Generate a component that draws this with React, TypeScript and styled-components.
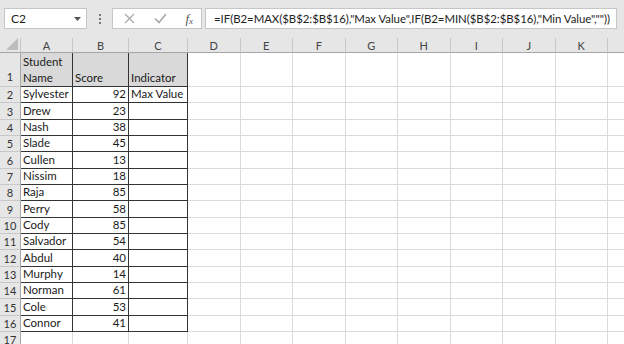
import styled, { createGlobalStyle } from "styled-components";

const GlobalStyle = createGlobalStyle`
  html, body {
    margin: 0;
    padding: 0;
    background: #ffffff;
    overflow: hidden;
  }
  body {
    font-family: Lato, "Liberation Sans", sans-serif;
  }
`;

const columns = ["A", "B", "C", "D", "E", "F", "G", "H", "I", "J", "K", "L"];

const students: [string, number, string][] = [
  ["Sylvester", 92, "Max Value"],
  ["Drew", 23, ""],
  ["Nash", 38, ""],
  ["Slade", 45, ""],
  ["Cullen", 13, ""],
  ["Nissim", 18, ""],
  ["Raja", 85, ""],
  ["Perry", 58, ""],
  ["Cody", 85, ""],
  ["Salvador", 54, ""],
  ["Abdul", 40, ""],
  ["Murphy", 14, ""],
  ["Norman", 61, ""],
  ["Cole", 53, ""],
  ["Connor", 41, ""],
];

const FORMULA =
  '=IF(B2=MAX($B$2:$B$16),"Max Value",IF(B2=MIN($B$2:$B$16),"Min Value",""))';

function App() {
  return (
    <Page>
      <GlobalStyle />
      <Toolbar>
        <NameBox>
          <span>C2</span>
          <svg width="7" height="4" viewBox="0 0 7 4">
            <path d="M0 0 L7 0 L3.5 4 Z" fill="#555" />
          </svg>
        </NameBox>
        <Grip>
          <i />
          <i />
          <i />
        </Grip>
        <FuncBox>
          <svg width="11" height="11" viewBox="0 0 11 11">
            <path d="M1 1 L10 10 M10 1 L1 10" stroke="#a8a8a8" strokeWidth="1.2" />
          </svg>
          <svg width="13" height="11" viewBox="0 0 13 11">
            <path d="M1 5.5 L5 9.5 L12 1" stroke="#a8a8a8" strokeWidth="1.6" fill="none" />
          </svg>
          <Fx>
            f<sub>x</sub>
          </Fx>
        </FuncBox>
        <FormulaInput>{FORMULA}</FormulaInput>
      </Toolbar>

      <Sheet>
        <Corner>
          <svg width="12" height="12" viewBox="0 0 12 12">
            <path d="M12 0 L12 12 L0 12 Z" fill="#bdbdbd" />
          </svg>
        </Corner>
        {columns.map((c, i) => (
          <ColHead key={c}>{i < 11 ? c : ""}</ColHead>
        ))}

        <RowHead $tall>1</RowHead>
        <Cell $boxed $fill $wrap>
          Student Name
        </Cell>
        <Cell $boxed $fill>
          Score
        </Cell>
        <Cell $boxed $fill>
          Indicator
        </Cell>
        {columns.slice(3).map((c) => (
          <Cell key={c} />
        ))}

        {students.map(([name, score, note], i) => (
          <Row key={name} idx={i + 2} name={name} score={score} note={note} />
        ))}

        <RowHead>17</RowHead>
        {columns.map((c) => (
          <Cell key={c} />
        ))}
      </Sheet>
    </Page>
  );
}

function Row({ idx, name, score, note }: { idx: number; name: string; score: number; note: string }) {
  return (
    <>
      <RowHead>{idx}</RowHead>
      <Cell $boxed>{name}</Cell>
      <Cell $boxed $right>
        {score}
      </Cell>
      <Cell $boxed>{note}</Cell>
      {columns.slice(3).map((c) => (
        <Cell key={c} />
      ))}
    </>
  );
}

export default App;

const Page = styled.div`
  width: 624px;
  height: 344px;
  overflow: hidden;
  background: #ffffff;
`;

const Toolbar = styled.div`
  box-sizing: border-box;
  height: 38px;
  background: #e6e6e6;
  display: flex;
  align-items: center;
  padding: 0 0 1px 4px;
`;

const Box = styled.div`
  box-sizing: border-box;
  height: 21px;
  background: #ffffff;
  border: 1px solid #c6c6c6;
  display: flex;
  align-items: center;
`;

const NameBox = styled(Box)`
  width: 83px;
  padding: 0 5px 0 6px;
  justify-content: space-between;
  font-size: 12px;
  color: #222;
`;

const Grip = styled.div`
  width: 25px;
  display: flex;
  flex-direction: column;
  align-items: center;
  gap: 2px;

  & > i {
    width: 2px;
    height: 2px;
    background: #777;
  }
`;

const FuncBox = styled(Box)`
  width: 90px;
  padding: 0 8px 0 11px;
  justify-content: space-between;
`;

const Fx = styled.span`
  font-family: "Liberation Serif", serif;
  font-style: italic;
  font-size: 13px;
  color: #555;
  line-height: 1;

  & > sub {
    font-size: 9px;
    vertical-align: -1px;
  }
`;

const FormulaInput = styled(Box)`
  margin-left: 3px;
  width: 412px;
  padding-left: 8px;
  font-size: 11.4px;
  letter-spacing: -0.03px;
  color: #222;
  white-space: nowrap;
  overflow: hidden;
`;

const Sheet = styled.div`
  display: grid;
  grid-template-columns: 21px 52px 56px 59px repeat(9, 52.5px);
  grid-template-rows: 15px 34px repeat(16, 16.33px);
  font-size: 11.5px;
  color: #1a1a1a;
`;

const Corner = styled.div`
  box-sizing: border-box;
  background: #e6e6e6;
  border-right: 1px solid #c8c8c8;
  border-bottom: 1px solid #a6a6a6;
  display: flex;
  align-items: flex-end;
  justify-content: flex-end;
  padding: 0 2px 2px 0;
`;

const ColHead = styled.div`
  box-sizing: border-box;
  background: #e6e6e6;
  border-right: 1px solid #c8c8c8;
  border-bottom: 1px solid #a6a6a6;
  display: flex;
  align-items: center;
  justify-content: center;
  font-size: 11px;
  color: #444;
`;

const RowHead = styled.div<{ $tall?: boolean }>`
  box-sizing: border-box;
  background: #e6e6e6;
  border-right: 1px solid #a6a6a6;
  border-bottom: 1px solid #c8c8c8;
  display: flex;
  align-items: flex-end;
  justify-content: center;
  padding-bottom: ${(p) => (p.$tall ? "2px" : "0")};
  font-size: 11px;
  line-height: 15px;
  color: #333;
`;

const Cell = styled.div<{ $boxed?: boolean; $fill?: boolean; $right?: boolean; $wrap?: boolean }>`
  box-sizing: border-box;
  border-right: 1px solid ${(p) => (p.$boxed ? "#333" : "#dadada")};
  border-bottom: 1px solid ${(p) => (p.$boxed ? "#333" : "#dadada")};
  background: ${(p) => (p.$fill ? "#d9d9d9" : "#ffffff")};
  display: flex;
  align-items: flex-end;
  justify-content: ${(p) => (p.$right ? "flex-end" : "flex-start")};
  padding: 0 2px 0 2px;
  line-height: 16px;
  white-space: ${(p) => (p.$wrap ? "normal" : "nowrap")};
  overflow: hidden;
`;
